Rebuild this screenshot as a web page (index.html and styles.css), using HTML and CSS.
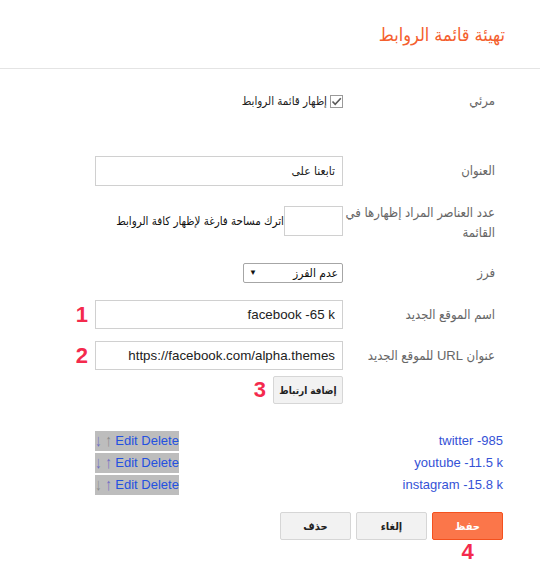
FILE: index.html
```html
<!DOCTYPE html>
<html lang="ar" dir="rtl">
<head>
<meta charset="utf-8">
<title>تهيئة قائمة الروابط</title>
<link rel="stylesheet" href="styles.css">
</head>
<body>
<header class="top">
  <h1 class="title">تهيئة قائمة الروابط</h1>
</header>
<main class="form">
  <div class="row r-visible">
    <div class="label">مرئي</div>
    <div class="field">
      <label class="check">
        <span class="box"><svg width="13" height="13" viewBox="0 0 13 13"><rect x="0.5" y="0.5" width="12" height="12" fill="#fff" stroke="#9a9a9a"/><path d="M2.5 6.5 L5.2 9.3 L10.8 3.2" fill="none" stroke="#5a5a5a" stroke-width="1.6"/></svg></span>
        <span class="check-text">إظهار قائمة الروابط</span>
      </label>
    </div>
  </div>

  <div class="row r-title">
    <div class="label">العنوان</div>
    <div class="field"><input class="text" type="text" value="تابعنا على"></div>
  </div>

  <div class="row r-count">
    <div class="label">عدد العناصر المراد إظهارها في<br>القائمة</div>
    <div class="field field-count">
      <input class="text count" type="text" value="">
      <span class="hint">اترك مساحة فارغة لإظهار كافة الروابط</span>
    </div>
  </div>

  <div class="row r-sort">
    <div class="label">فرز</div>
    <div class="field">
      <span class="select"><select><option>عدم الفرز</option></select></span>
    </div>
  </div>

  <div class="row r-name">
    <div class="label">اسم الموقع الجديد</div>
    <div class="field">
      <span class="num">1</span>
      <input class="text latin" type="text" value="facebook -65 k">
    </div>
  </div>

  <div class="row r-url">
    <div class="label">عنوان URL للموقع الجديد</div>
    <div class="field">
      <span class="num">2</span>
      <input class="text latin" type="text" value="https://facebook.com/alpha.themes">
    </div>
  </div>

  <div class="row r-add">
    <div class="label"></div>
    <div class="field">
      <span class="btn-wrap"><span class="num">3</span><button class="btn add">إضافة ارتباط</button></span>
    </div>
  </div>

  <ul class="links">
    <li><span class="name">twitter -985</span><span class="acts"><a class="arr a-b">↓</a> <a class="arr a-g">↑</a> <a>Edit</a> <a>Delete</a></span></li>
    <li><span class="name">youtube -11.5 k</span><span class="acts"><a class="arr a-b">↓</a> <a class="arr a-b">↑</a> <a>Edit</a> <a>Delete</a></span></li>
    <li><span class="name">instagram -15.8 k</span><span class="acts"><a class="arr a-g">↓</a> <a class="arr a-b">↑</a> <a>Edit</a> <a>Delete</a></span></li>
  </ul>

  <div class="actions">
    <span class="btn-wrap"><button class="btn save">حفظ</button><span class="num num-below">4</span></span>
    <button class="btn">إلغاء</button>
    <button class="btn">حذف</button>
  </div>
</main>
</body>
</html>
```

FILE: styles.css
```css
* { box-sizing: border-box; }
html, body { margin: 0; padding: 0; background: #fff; }
body {
  width: 540px;
  height: 569px;
  overflow: hidden;
  font-family: "Liberation Sans", Arial, "DejaVu Sans Condensed", "DejaVu Sans", sans-serif;
  font-size: 13px;
  color: #333;
}

.top {
  height: 69px;
  border-bottom: 1px solid #e4e4e4;
  padding: 22px 35px 0 0;
}
.title {
  margin: 0;
  font-weight: normal;
  font-size: 18px;
  line-height: 26px;
  color: #f4602e;
}

.form { padding: 0 37px 0 95px; }

.row {
  display: flex;
  align-items: center;
  gap: 2px;
  padding-right: 8px;
}
.label {
  width: 150px;
  flex: none;
  color: #666;
  font-size: 13px;
  line-height: 20px;
}
.field {
  width: 248px;
  flex: none;
  position: relative;
  display: flex;
  align-items: center;
}

.r-visible { margin-top: 22px; height: 20px; }
.r-title { margin-top: 45px; }
.r-count { margin-top: 17px; align-items: flex-start; }
.r-count .field { margin-top: 3px; }
.r-sort { margin-top: 20px; }
.r-name { margin-top: 17px; }
.r-url { margin-top: 12px; }
.r-add { margin-top: 6px; }

.check { display: flex; align-items: center; gap: 3px; }
.box { display: block; width: 13px; height: 13px; }
.box svg { display: block; }
.check-text { font-size: 11.5px; color: #222; }

.text {
  width: 248px;
  height: 30px;
  border: 1px solid #d0d0d0;
  border-radius: 0;
  padding: 0 7px;
  margin: 0;
  font-family: "Liberation Sans", Arial, "DejaVu Sans Condensed", "DejaVu Sans", sans-serif;
  font-size: 12px;
  color: #222;
  background: #fff;
  direction: rtl;
  outline: none;
}
.latin { height: 29px; font-size: 13.33px; }
.count { width: 59px; flex: none; }
.hint { font-size: 11.5px; color: #111; white-space: nowrap; }

.select {
  position: relative;
  display: block;
  width: 100px;
  height: 20px;
  border: 1px solid #a6a6a6;
  border-radius: 2px;
  background: #fff;
}
.select select {
  appearance: none;
  -webkit-appearance: none;
  border: 0;
  background: transparent;
  width: 100%;
  height: 18px;
  padding: 0 4px 0 0;
  margin: 0;
  font-family: "Liberation Sans", Arial, "DejaVu Sans Condensed", "DejaVu Sans", sans-serif;
  font-size: 12px;
  color: #111;
  outline: none;
}
.select::after {
  content: "▼";
  position: absolute;
  left: 5px;
  top: 4px;
  font-size: 8px;
  line-height: 10px;
  color: #111;
}

.num {
  position: absolute;
  right: calc(100% + 7px);
  top: 50%;
  margin-top: -12px;
  font-family: "Liberation Sans", Arial, sans-serif;
  font-weight: bold;
  font-size: 22px;
  line-height: 24px;
  color: #f42a4d;
}

.btn-wrap { position: relative; display: block; }
.btn {
  display: block;
  height: 28px;
  margin: 0;
  padding: 0;
  border: 1px solid #d6d6d6;
  border-radius: 2px;
  background: #f2f2f2;
  font-family: "Liberation Sans", Arial, "DejaVu Sans Condensed", "DejaVu Sans", sans-serif;
  font-size: 11px;
  font-weight: bold;
  color: #222;
  width: 71px;
  white-space: nowrap;
}
.add { width: 70px; font-size: 10px; }

.links {
  list-style: none;
  margin: 26px 0 0;
  padding: 0;
}
.links li {
  display: flex;
  justify-content: space-between;
  align-items: center;
  height: 22px;
}
.name { color: #3552d6; font-size: 13px; line-height: 20px; }
.acts {
  direction: ltr;
  background: #bdbdbd;
  line-height: 20px;
  font-size: 13px;
}
.acts a { color: #2351e0; text-decoration: none; }
.acts .arr { display: inline-block; transform: scaleY(1.3); }
.acts .a-b { color: #6c6cc4; }
.acts .a-g { color: #8a8a8a; }

.actions {
  display: flex;
  gap: 5px;
  margin-top: 16px;
}
.save {
  background: #fb764a;
  border-color: #f4511e;
  color: #fff;
}
.num-below {
  right: auto;
  top: 100%;
  left: 50%;
  margin: 0 0 0 -6px;
}
```
